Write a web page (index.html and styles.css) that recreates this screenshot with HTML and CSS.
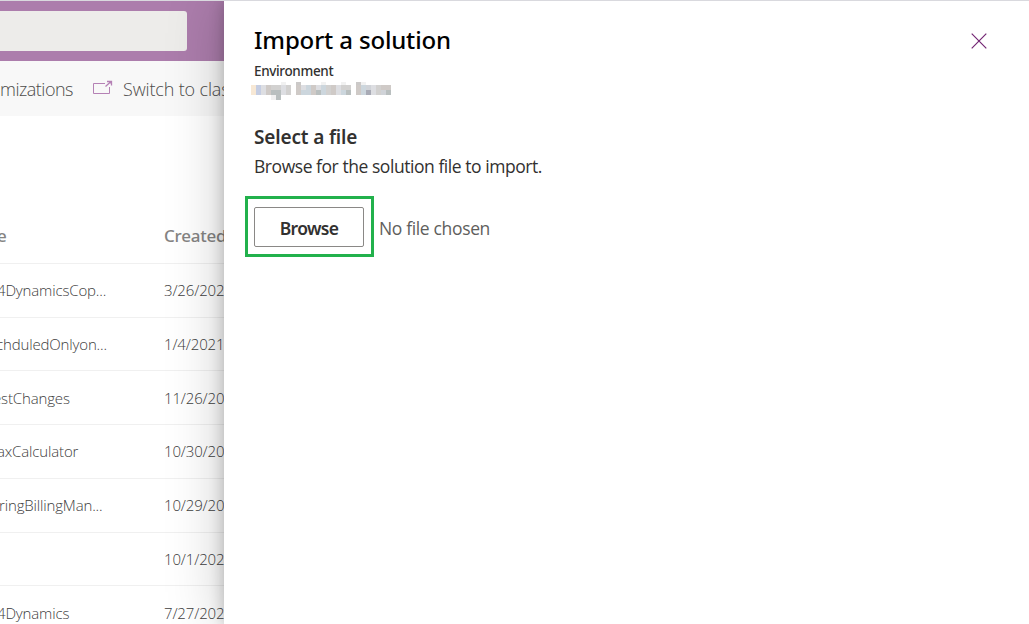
FILE: index.html
```
<!DOCTYPE html>
<html lang="en">
<head>
<meta charset="utf-8">
<title>Import a solution</title>
<link rel="stylesheet" href="styles.css">
</head>
<body>
<div class="app">
  <main class="page">
    <header class="topbar"><div class="search"></div></header>
    <nav class="commands">
      <span class="command customizations">mizations</span>
      <svg class="open-icon" width="20" height="16" viewBox="0 0 20 16" fill="none" stroke="#b581b5"><path d="M12 3.5H.5v10h16V7"/><path d="M12.5 6.5l5.500-5M14 1.500h4.500v4" stroke-width="1.3"/><path d="M15 1h4v4z" fill="#b581b5" stroke="none"/></svg>
      <span class="command switch">Switch to clas</span>
    </nav>
    <section class="table">
      <div class="row head"><span class="name n0">e</span><span class="date created">Created</span></div>
      <div class="row"><span class="name n1">4DynamicsCop...</span><span class="date">3/26/202</span></div>
      <div class="row"><span class="name n2">chduledOnlyon...</span><span class="date">1/4/2021</span></div>
      <div class="row"><span class="name n3">estChanges</span><span class="date">11/26/20</span></div>
      <div class="row"><span class="name n4">axCalculator</span><span class="date">10/30/20</span></div>
      <div class="row"><span class="name n5">ringBillingMan...</span><span class="date">10/29/20</span></div>
      <div class="row"><span class="name"></span><span class="date">10/1/202</span></div>
      <div class="row"><span class="name n7">4Dynamics</span><span class="date">7/27/202</span></div>
    </section>
  </main>
  <aside class="panel">
    <div class="panel-head">
      <h1 class="title">Import a solution</h1>
      <svg class="close" width="16" height="16" viewBox="0 0 16 16" stroke="#742774" stroke-width="1.2"><path d="M.7.7l14.6 14.6M15.3.7L.7 15.3"/></svg>
    </div>
    <div class="env">Environment</div>
    <svg class="redacted" width="140" height="18" viewBox="0 0 140 18" shape-rendering="crispEdges">
      <path fill="#f1f1f1" d="M30 0h5v3h-5zM70 0h5v3h-5zM90 0h5v3h-5zM110 0h5v3h-5zM20 13h5v5h-5z"/>
      <path fill="#cbc9c8" d="M45 0h5v3h-5zM105 0h5v3h-5z"/>
      <path fill="#f7e8d5" d="M0 3h5v10H0z"/>
      <path fill="#c5cde2" d="M5 3h5v10H5z"/>
      <path fill="#dddee2" d="M10 3h5v10h-5zM30 3h5v10h-5zM50 3h5v5h-5zM65 3h5v5h-5zM85 3h5v10h-5zM120 3h5v10h-5z"/>
      <path fill="#cfcac7" d="M15 3h5v10h-5zM45 3h5v10h-5zM60 3h5v10h-5zM80 3h5v10h-5zM105 3h5v10h-5zM130 3h10v5h-10z"/>
      <path fill="#b9bfbf" d="M20 8h5v5h-5zM25 8h5v10h-5zM65 8h5v5h-5zM95 8h5v5h-5zM135 8h5v5h-5z"/>
      <path fill="#d2d1d0" d="M20 3h10v5H20zM35 3h5v10h-5zM75 3h5v10h-5zM90 3h10v5H90zM125 3h5v10h-5z"/>
      <path fill="#ccd6dd" d="M50 8h5v5h-5zM55 3h5v10h-5zM70 3h5v10h-5zM90 8h5v5h-5zM110 3h5v10h-5z"/>
      <path fill="#a8aab5" d="M115 8h5v5h-5z"/>
      <path fill="#d0d3d8" d="M115 3h5v5h-5zM130 8h5v5h-5z"/>
    </svg>
    <h2 class="subtitle">Select a file</h2>
    <p class="hint">Browse for the solution file to import.</p>
    <div class="picker">
      <div class="highlight"><button class="browse">Browse</button></div>
      <span class="status">No file chosen</span>
    </div>
  </aside>
</div>
</body>
</html>
```
FILE: styles.css
```
* { box-sizing: border-box; }
body { margin: 0; font-family: "Noto Sans", "Open Sans", sans-serif; background: #fff; }
.app { display: flex; width: 1029px; height: 624px; overflow: hidden; border-top: 1px solid #d9d9de; }
.page { width: 224px; flex: none; overflow: hidden; white-space: nowrap; color: #7d7c7b; }
.topbar { height: 60px; padding-top: 10px; background: #ac7dac; }
.search { width: 187px; height: 40px; background: #edecea; border-radius: 0 3px 3px 0; }
.commands { display: flex; align-items: center; height: 55px; background: #f8f8f8; font-family: "Open Sans", sans-serif; font-size: 18px; font-weight: 300; letter-spacing: -.5px; color: #4c4b4a; }
.customizations { width: 93px; flex: none; }
.open-icon { flex: none; margin: 0 10px 2px 0; }
.switch { letter-spacing: -.15px; }
.table { padding-top: 94px; }
.row { display: flex; align-items: center; height: 53.75px; border-bottom: 1px solid #f0f0f0; font-family: "Open Sans", sans-serif; font-size: 15px; font-weight: 300; letter-spacing: -.15px; color: #404040; }
.name { width: 164px; flex: none; }
.n0 { text-indent: -3px; }
.n1, .n7 { text-indent: -3px; }
.n2 { text-indent: -4px; }
.n3 { text-indent: -7px; }
.n4 { text-indent: -3px; }
.n5 { text-indent: -1px; }
.head { padding-bottom: 2px; font-family: "Noto Sans", sans-serif; font-size: 17px; font-weight: 500; letter-spacing: -.25px; color: #858483; }
.panel { flex: 1; padding: 21px 42px 0 30px; background: #fff; box-shadow: 0 0 54px rgba(0,0,0,.22), 0 0 14px rgba(0,0,0,.22); position: relative; }
.panel-head { display: flex; justify-content: space-between; align-items: center; height: 34px; }
.title { margin: 0; font-size: 24px; font-weight: 500; letter-spacing: -.16px; color: #000; }
.close { margin-top: 4px; }
.env { height: 18px; margin-top: 6px; font-size: 13.5px; line-height: 18px; font-weight: 500; letter-spacing: -.35px; color: #323130; }
.redacted { display: block; margin: 2px 0 0 -3px; }
.subtitle { margin: 25px 0 0; font-size: 19px; line-height: 24px; font-weight: 600; letter-spacing: -.15px; color: #323130; }
.hint { margin: 5px 0 0; font-family: "Open Sans", sans-serif; font-size: 17.5px; line-height: 24px; letter-spacing: -.45px; color: #323130; }
.picker { display: flex; align-items: center; margin: 18px 0 0 -9px; gap: 5px; }
.highlight { width: 129px; height: 61px; padding: 8px 6px; border: 3px solid #22b14c; }
.browse { width: 110px; height: 40px; padding: 1px 0 0; border: 1px solid #8a8886; border-radius: 2px; background: #fff; font: 600 17.5px "Noto Sans", sans-serif; letter-spacing: -.7px; color: #323130; }
.status { padding-top: 3px; font-family: "Open Sans", sans-serif; font-size: 17.5px; letter-spacing: -.35px; color: #605e5c; }
```
